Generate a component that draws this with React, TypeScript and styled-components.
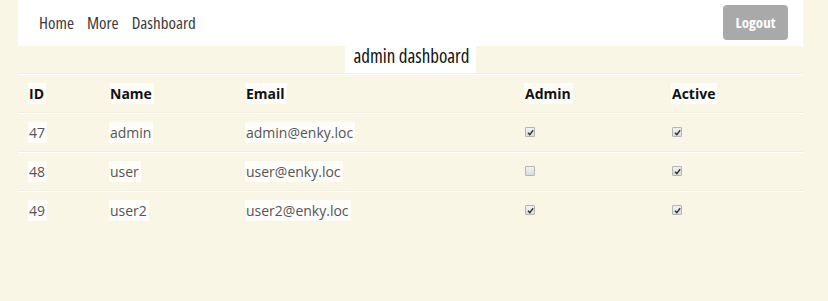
import React from 'react';
import styled, { createGlobalStyle } from 'styled-components';

const GlobalStyle = createGlobalStyle`
  html, body {
    margin: 0;
    padding: 0;
    background: #f9f6e5;
  }
`

const narrow = `
  font-family: "Open Sans", "Noto Sans", sans-serif;
  font-stretch: 75%;
`

const Page = styled.div`
  width: 785px;
  margin-left: 18px;
  font-family: "Open Sans", "Noto Sans", sans-serif;
`

const NavBar = styled.nav`
  display: flex;
  flex-direction: row;
  align-items: center;
  justify-content: space-between;
  height: 46px;
  padding: 0 15px 2px 21px;
  box-sizing: border-box;
  background: #ffffff;
`

const NavLinks = styled.div`
  display: flex;
  flex-direction: row;
  gap: 13px;
`

const NavLink = styled.a`
  ${narrow}
  font-size: 17px;
  color: #3a3a3a;
  text-decoration: none;
`

const LogoutButton = styled.button`
  ${narrow}
  width: 65px;
  height: 35px;
  border: none;
  border-radius: 4px;
  background: #a9a9a9;
  color: #ffffff;
  font-weight: 700;
  font-size: 15px;
  padding: 0;
`

const TitleRow = styled.div`
  display: flex;
  justify-content: center;
  height: 28px;
`

const Title = styled.span`
  ${narrow}
  font-size: 19px;
  line-height: 20px;
  color: #111111;
  background: #ffffff;
  padding: 0 6px 0 8px;
`

const Table = styled.div`
  display: flex;
  flex-direction: column;
`

const Row = styled.div`
  display: grid;
  grid-template-columns: 81px 136px 279px 147px 1fr;
  align-items: center;
  height: 39px;
  padding-bottom: 2px;
  box-sizing: border-box;
  border-top: 1px solid #ffffff;
  box-shadow: 0 -1px 0 #f1ede0;
`

const Cell = styled.div<{ head?: boolean }>`
  padding-left: 10px;
  font-size: 14px;
  font-weight: ${p => (p.head ? 700 : 400)};
  color: ${p => (p.head ? '#111111' : '#555555')};
`

const CellText = styled.span`
  background: rgba(255, 255, 255, 0.75);
  padding: 1px 2px 1px 1px;
`

const CheckCell = styled.div`
  padding-left: 11px;
  display: flex;
  align-items: center;
`

const Box = styled.span`
  display: inline-flex;
  align-items: center;
  justify-content: center;
  width: 8px;
  height: 8px;
  border: 1px solid #b4b4b4;
  border-radius: 1px;
  background: linear-gradient(#f2f2f2, #dcdcdc);
`

const Check = ({ on }: { on: boolean }) => (
  <Box>
    {on ? (
      <svg width="7" height="7" viewBox="0 0 7 7">
        <path d="M1 3.8 L2.8 5.6 L6.2 1.2" fill="none" stroke="#333" strokeWidth="1.4" />
      </svg>
    ) : null}
  </Box>
)

const users = [
  { id: 47, name: 'admin', email: 'admin@enky.loc', admin: true, active: true },
  { id: 48, name: 'user', email: 'user@enky.loc', admin: false, active: true },
  { id: 49, name: 'user2', email: 'user2@enky.loc', admin: true, active: true },
]

export default function App() {
  return (
    <>
      <GlobalStyle />
      <Page>
        <NavBar>
          <NavLinks>
            <NavLink href="#">Home</NavLink>
            <NavLink href="#">More</NavLink>
            <NavLink href="#">Dashboard</NavLink>
          </NavLinks>
          <LogoutButton>Logout</LogoutButton>
        </NavBar>
        <TitleRow>
          <Title>admin dashboard</Title>
        </TitleRow>
        <Table>
          <Row>
            <Cell head><CellText>ID</CellText></Cell>
            <Cell head><CellText>Name</CellText></Cell>
            <Cell head><CellText>Email</CellText></Cell>
            <Cell head><CellText>Admin</CellText></Cell>
            <Cell head><CellText>Active</CellText></Cell>
          </Row>
          {users.map(u => (
            <Row key={u.id}>
              <Cell><CellText>{u.id}</CellText></Cell>
              <Cell><CellText>{u.name}</CellText></Cell>
              <Cell><CellText>{u.email}</CellText></Cell>
              <CheckCell><Check on={u.admin} /></CheckCell>
              <CheckCell><Check on={u.active} /></CheckCell>
            </Row>
          ))}
        </Table>
      </Page>
    </>
  )
}
